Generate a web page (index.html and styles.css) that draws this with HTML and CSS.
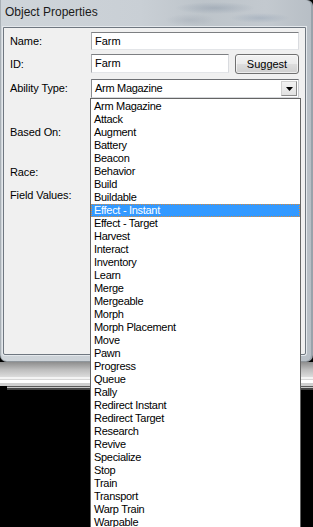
FILE: index.html
```html
<!DOCTYPE html>
<html>
<head>
<meta charset="utf-8">
<link rel="stylesheet" href="styles.css">
</head>
<body>
<div class="screen">
  <div class="window">
    <div class="titlebar"><span class="title">Object Properties</span></div>
    <div class="panel">
      <div class="form">
        <div class="row r-name">
          <div class="lbl">Name:</div>
          <div class="textbox">Farm</div>
        </div>
        <div class="row r-id">
          <div class="lbl">ID:</div>
          <div class="textbox id">Farm</div>
          <div class="btn">Suggest</div>
        </div>
        <div class="row r-type">
          <div class="lbl">Ability Type:</div>
          <div class="combo">
            <span class="combo-text">Arm Magazine</span>
            <span class="drop"><svg width="7" height="4" viewBox="0 0 7 4"><path d="M0 0H7L3.5 4Z" fill="#000"/></svg></span>
          </div>
        </div>
        <div class="row r-based"><div class="lbl">Based On:</div></div>
        <div class="row r-race"><div class="lbl">Race:</div></div>
        <div class="row r-field"><div class="lbl">Field Values:</div></div>
      </div>
    </div>
  </div>
  <div class="backdrop">
    <div class="bd-grad"></div>
    <div class="bd-light"></div>
    <div class="bd-line"></div>
  </div>

  <ul class="listbox">
    <li>Arm Magazine</li>
    <li>Attack</li>
    <li>Augment</li>
    <li>Battery</li>
    <li>Beacon</li>
    <li>Behavior</li>
    <li>Build</li>
    <li>Buildable</li>
    <li class="selected">Effect - Instant</li>
    <li>Effect - Target</li>
    <li>Harvest</li>
    <li>Interact</li>
    <li>Inventory</li>
    <li>Learn</li>
    <li>Merge</li>
    <li>Mergeable</li>
    <li>Morph</li>
    <li>Morph Placement</li>
    <li>Move</li>
    <li>Pawn</li>
    <li>Progress</li>
    <li>Queue</li>
    <li>Rally</li>
    <li>Redirect Instant</li>
    <li>Redirect Target</li>
    <li>Research</li>
    <li>Revive</li>
    <li>Specialize</li>
    <li>Stop</li>
    <li>Train</li>
    <li>Transport</li>
    <li>Warp Train</li>
    <li>Warpable</li>
  </ul>
</div>
</body>
</html>
```

FILE: styles.css
```css
* { box-sizing: border-box; }

html, body {
  margin: 0;
  padding: 0;
  background: #000;
}

.screen {
  position: relative;
  width: 313px;
  height: 527px;
  overflow: hidden;
  background: #000;
  font-family: "Liberation Sans", Arial, sans-serif;
  font-size: 11px;
  color: #000;
}

.window {
  display: flex;
  flex-direction: column;
  height: 362px;
  border-radius: 0 6px 7px 7px;
  background:
    radial-gradient(ellipse 40px 6px at 215px 8px, rgba(120,135,155,0.35), transparent),
    radial-gradient(ellipse 30px 5px at 260px 18px, rgba(120,140,165,0.30), transparent),
    radial-gradient(ellipse 25px 6px at 190px 20px, rgba(140,150,165,0.25), transparent),
    linear-gradient(90deg, #cfd5da 0%, #c9cfd5 45%, #bdc4ca 65%, #c3c9cf 85%, #b7bec5 100%);
  padding: 0 7px 7px 3px;
  box-shadow: inset -2px 0 0 #9aa2aa, inset 1px 0 0 #a9b0b6, inset 0 -1px 0 #8f969c;
}

.titlebar {
  height: 27px;
  display: flex;
  align-items: flex-start;
  padding: 5px 0 0 2px;
}

.title {
  font-size: 12px;
  color: #1a1a1a;
  line-height: 15px;
}

.panel {
  flex: 1;
  background: #f0f0f0;
  border: 1px solid #6f7780;
  border-radius: 0 0 2px 2px;
  box-shadow: 0 0 0 1px #e4e8ec;
}

.form {
  display: flex;
  flex-direction: column;
  padding: 4px 6px 0 6px;
}

.row {
  display: flex;
  align-items: center;
}

.lbl {
  width: 81px;
  flex: none;
  line-height: 13px;
  letter-spacing: -0.1px;
}

.r-name { height: 18px; }
.r-id { height: 20px; margin-top: 4px; align-items: flex-start; }
.r-id .lbl { margin-top: 4px; }
.r-type { height: 19px; margin-top: 5px; }
.r-based { height: 13px; margin-top: 28px; }
.r-race { height: 13px; margin-top: 27px; }
.r-field { height: 13px; margin-top: 10px; }

.textbox {
  flex: 1;
  height: 18px;
  background: #fff;
  border-style: solid;
  border-width: 1px;
  border-color: #7d7f82 #d9dbdf #e3e5e8 #a9abaf;
  padding: 0 3px;
  line-height: 16px;
}

.textbox.id {
  flex: none;
  width: 138px;
  height: 19px;
  line-height: 17px;
  margin-right: 6px;
}

.btn {
  flex: 1;
  height: 20px;
  border: 1px solid #707070;
  border-radius: 3px;
  background: linear-gradient(#f3f3f3 0%, #ebebeb 48%, #dddddd 52%, #cfcfcf 100%);
  box-shadow: inset 0 0 0 1px rgba(255,255,255,0.6);
  text-align: center;
  line-height: 18px;
  font-size: 11px;
}

.combo {
  flex: 1;
  display: flex;
  align-items: center;
  height: 19px;
  background: #fff;
  border-style: solid;
  border-width: 1px;
  border-color: #6e7074 #c9cbcf #d6d8dc #8a8c90;
  padding: 0 1px 0 3px;
}

.combo-text {
  flex: 1;
  line-height: 17px;
  letter-spacing: -0.3px;
}

.drop {
  width: 16px;
  height: 15px;
  display: flex;
  align-items: center;
  justify-content: center;
  background: linear-gradient(#f2f2f2, #e2e2e2);
  border: 1px solid #b4b4b4;
  border-color: #d0d0d0 #8c8c8c #8c8c8c #d0d0d0;
}

.backdrop {
  height: 28px;
  display: flex;
  flex-direction: column;
}

.bd-grad {
  height: 15px;
  background: linear-gradient(#8d8d8d, #bdbdbd 50%, #dcdcdc);
}

.bd-light {
  height: 9px;
  background: linear-gradient(#f4f4f4 0 2px, #d6d6d6 2px 3px, #ffffff 3px 6px, #cfcfcf 6px);
}

.bd-line {
  height: 4px;
  background: linear-gradient(#5a5a5a 0 1px, #c8c8c8 1px 2px, #444 2px);
  margin: 0 0 0 7px;
}

.listbox {
  position: absolute;
  left: 90px;
  top: 98px;
  width: 211px;
  height: 440px;
  margin: 0;
  padding: 1px 0 0 0;
  list-style: none;
  background: #fff;
  border: 1px solid #646464;
}

.listbox li {
  height: 13px;
  line-height: 13px;
  padding-left: 3px;
  letter-spacing: -0.3px;
  white-space: nowrap;
}

.listbox li.selected {
  background: #3399ff;
  color: #fff;
  outline: 1px dotted #d98a3a;
  outline-offset: -1px;
}
```
